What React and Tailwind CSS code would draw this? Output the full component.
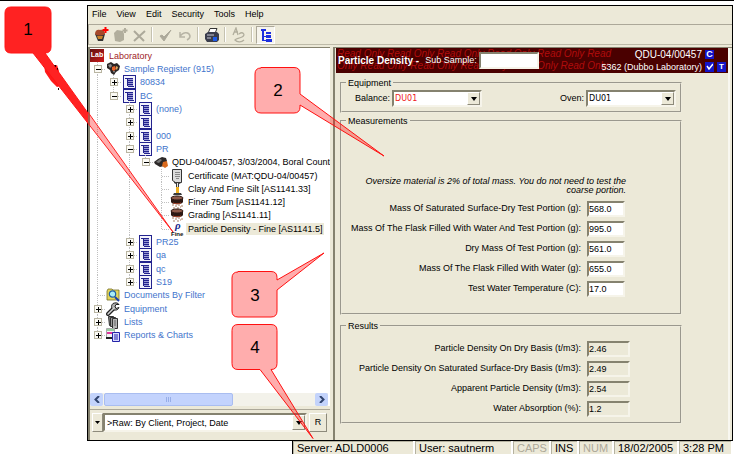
import React from "react";

const BLUE = "text-[#3f74cc]";

function SheetIcon() {
  return (
    <svg className="block shrink-0" width="14" height="14" viewBox="0 0 14 14" shapeRendering="crispEdges">
      <rect x="1" y="0" width="13" height="14" fill="#23238e" />
      <rect x="2" y="1" width="11" height="12" fill="#f4f4fc" />
      <path d="M5 4h6v7H5z" fill="#9a9ad4" />
      <path d="M3 3h8v1H3zM5 4h1v7H5zM6 5h5v1H6zM6 7h5v1H6zM6 9h5v1H6zM6 11h6v1H6z" fill="#23238e" />
    </svg>
  );
}

function RegisterIcon() {
  return (
    <svg className="block shrink-0" width="14" height="14" viewBox="0 0 14 14">
      <path d="M1 2l4-2 3 2 3-1 3 3-1 4-3 2-2 3-3-2-1-3-3-2z" fill="#2a2424" />
      <path d="M2 3l3-1 1 2-2 2z" fill="#8b8b8b" />
      <path d="M6 5l3-1 1 3-2 2-2-1z" fill="#e8622a" />
      <path d="M10 4l2 1-1 3-1-1z" fill="#d9a85c" />
      <path d="M7 9l2 0-1 2z" fill="#999" />
    </svg>
  );
}

function RockIcon() {
  return (
    <svg className="block shrink-0" width="14" height="14" viewBox="0 0 14 14">
      <path d="M0 7l4-3 4-2 4 1 1 3-3 5-4 1-5-3z" fill="#2c2828" />
      <path d="M2 7l4-3 2 1-3 3z" fill="#777" />
      <path d="M9 7l4-1 1 5-3 2-3-2z" fill="#d96a1e" />
    </svg>
  );
}

function CertificateIcon() {
  return (
    <svg className="block shrink-0" width="14" height="14" viewBox="0 0 14 14">
      <path d="M2.500 .5h9v13h-6l-3-2z" fill="#dcdcdc" stroke="#333" />
      <path d="M5 3.500h5M5 5.500h5M5 7.500h5M6 9.500h3" stroke="#888" />
    </svg>
  );
}

function CylinderIcon() {
  return (
    <svg className="block shrink-0" width="14" height="14" viewBox="0 0 14 14">
      <path d="M4 0h7v1L9 2v9h2l1 2H3l1-2h2V2L4 1z" fill="#3b3b3b" />
      <path d="M7 1h1v4H7z" fill="#e6e6e6" />
      <path d="M6 5h3v6H6z" fill="#f0b020" />
    </svg>
  );
}

function SieveIcon() {
  return (
    <svg className="block shrink-0" width="14" height="14" viewBox="0 0 14 14">
      <path d="M1 3v4c1 3 11 3 12 0V3z" fill="#2b1712" />
      <ellipse cx="7" cy="3" rx="6" ry="2" fill="#8e5a4a" stroke="#2b1712" />
      <path d="M3 8c2 1 6 1 8 0" stroke="#b04c32" fill="none" />
      <path d="M2 10h2M5 11h2M8 10h2M11 11h2M3 13h2M7 13h2M10 12h1" stroke="#a97c62" />
    </svg>
  );
}

function DensityIcon() {
  return (
    <svg className="block shrink-0 overflow-visible" width="14" height="14" viewBox="0 0 14 14">
      <text x="5" y="7" fontFamily="Liberation Serif, serif" fontStyle="italic" fontWeight="bold" fontSize="11" fill="#1a2a8c">ρ</text>
      <text x="1" y="14" fontFamily="Liberation Sans, sans-serif" fontWeight="bold" fontSize="6" fill="#111">Fine</text>
    </svg>
  );
}

function FolderSearchIcon() {
  return (
    <svg className="block shrink-0" width="14" height="14" viewBox="0 0 14 14">
      <path d="M1 3l1-2h4l1 1h6v10H1z" fill="#e3d55a" stroke="#77702a" strokeWidth=".8" />
      <circle cx="6.500" cy="6" r="3.200" fill="#a8ecf6" stroke="#1d5fa8" strokeWidth="1.200" />
      <path d="M9 9l4 4" stroke="#1d3fa8" strokeWidth="2" />
    </svg>
  );
}

function WrenchIcon() {
  return (
    <svg className="block shrink-0" width="14" height="14" viewBox="0 0 14 14">
      <path d="M2 12l6-6" stroke="#222" strokeWidth="4" strokeLinecap="round" />
      <path d="M7 1.500c2-1 5-1 6 1l-3 0-1 2 1 2 3-1c-1 3-4 3-6 2-2-2-2-4 0-6z" fill="#aaa" stroke="#222" />
      <path d="M2 12l6-6" stroke="#d5d5d5" strokeWidth="1.500" strokeLinecap="round" />
    </svg>
  );
}

function ListsIcon() {
  return (
    <svg className="block shrink-0" width="14" height="14" viewBox="0 0 14 14">
      <path d="M2.500 1.500h5l1 9h-5z" fill="#888" stroke="#333" />
      <path d="M4.500 2.500h5v9h-5z" fill="#999" stroke="#333" />
      <path d="M6.500 3.500h5v10h-5z" fill="#b5b5b5" stroke="#333" />
      <path d="M8 6h2M8 8h2M8 10h2" stroke="#666" />
    </svg>
  );
}

function ReportsIcon() {
  return (
    <svg className="block shrink-0" width="14" height="14" viewBox="0 0 14 14">
      <path d="M.5.500h8v9h-8z" fill="#f4f4f4" stroke="#aaa" />
      <path d="M1 2h7" stroke="#3aa84a" />
      <path d="M1 5h6" stroke="#e0359b" strokeWidth="2" />
      <path d="M0 10h6" stroke="#222" strokeWidth="2" />
      <path d="M6.500 4.500h7v9h-7z" fill="#dcdcff" stroke="#2323a8" />
      <path d="M8 7h4M8 9h4M8 11h4" stroke="#2323a8" />
    </svg>
  );
}

const TREE = [
  { label: "Sample Register (915)", path: "", node: "-", icon: RegisterIcon, blue: true },
  { label: "80834", path: "|", node: "+", icon: SheetIcon, blue: true },
  { label: "BC", path: "|", node: "-", icon: SheetIcon, blue: true, last: true },
  { label: "(none)", path: "| ", node: "+", icon: SheetIcon, blue: true },
  { label: "", path: "| ", node: "+", icon: SheetIcon, blue: true },
  { label: "000", path: "| ", node: "+", icon: SheetIcon, blue: true },
  { label: "PR", path: "| ", node: "-", icon: SheetIcon, blue: true },
  { label: "QDU-04/00457, 3/03/2004, Boral Country", path: "| |", node: "-", icon: RockIcon, last: true },
  { label: "Certificate (MAT:QDU-04/00457)", path: "| | ", node: "t", icon: CertificateIcon },
  { label: "Clay And Fine Silt [AS1141.33]", path: "| | ", node: "t", icon: CylinderIcon },
  { label: "Finer 75um [AS1141.12]", path: "| | ", node: "t", icon: SieveIcon },
  { label: "Grading [AS1141.11]", path: "| | ", node: "t", icon: SieveIcon },
  { label: "Particle Density - Fine [AS1141.5]", path: "| | ", node: "t", icon: DensityIcon, last: true, selected: true },
  { label: "PR25", path: "| ", node: "+", icon: SheetIcon, blue: true },
  { label: "qa", path: "| ", node: "+", icon: SheetIcon, blue: true },
  { label: "qc", path: "| ", node: "+", icon: SheetIcon, blue: true },
  { label: "S19", path: "| ", node: "+", icon: SheetIcon, blue: true, last: true },
  { label: "Documents By Filter", path: "", node: "t", icon: FolderSearchIcon, blue: true },
  { label: "Equipment", path: "", node: "+", icon: WrenchIcon, blue: true },
  { label: "Lists", path: "", node: "+", icon: ListsIcon, blue: true },
  { label: "Reports & Charts", path: "", node: "+", icon: ReportsIcon, blue: true, last: true },
];

function Branch({ kind, last }) {
  const boxed = kind === "+" || kind === "-";
  return (
    <svg className="block shrink-0" width="16" height="14" viewBox="0 0 16 14" shapeRendering="crispEdges">
      {kind !== " " && <path d={last ? "M7.5 0v7" : "M7.5 0v14"} stroke="#c0c0c0" strokeDasharray="1 1" />}
      {kind !== " " && kind !== "|" && <path d="M8 7.500h8" stroke="#c0c0c0" strokeDasharray="1 1" />}
      {boxed && <rect x="4.500" y="3.500" width="7" height="7" fill="#fbfaf5" stroke="#b9b5a2" />}
      {boxed && <path d="M6 7.500h5" stroke="#000" />}
      {kind === "+" && <path d="M8.500 5v5" stroke="#000" />}
    </svg>
  );
}

function TreeRow({ row }) {
  const Icon = row.icon;
  return (
    <li className="flex min-w-0 items-center">
      {row.path.split("").map((c, i) => (
        <Branch key={i} kind={c} />
      ))}
      <Branch kind={row.node} last={row.last} />
      <Icon />
      <span
        className={
          "ml-[2px] h-[12px] whitespace-nowrap px-[2px] leading-[12px] " +
          (row.selected ? "bg-[#ece9d8] " : "") +
          (row.blue ? BLUE : "text-black")
        }
      >
        {row.label}
      </span>
    </li>
  );
}

function ToolButton({ label, pressed, children }) {
  return (
    <button
      type="button"
      aria-label={label}
      className={
        "flex h-[18px] w-[19px] items-center justify-center " +
        (pressed ? "border border-[#aca899] border-r-white border-b-white bg-[#f6f4ec]" : "")
      }
    >
      <svg width="16" height="16" viewBox="0 0 16 16">{children}</svg>
    </button>
  );
}

function Separator() {
  return <span className="mx-[3px] h-[15px] w-[2px] border-r border-l border-l-[#c5c2b0] border-r-white" />;
}

function Toolbar() {
  return (
    <div className="flex h-[21px] items-center border-t border-l border-t-[#aca899] border-l-[#aca899] border-b border-b-[#bdbaa8] pl-[2px]">
      <ToolButton label="New sample">
        <path d="M2 7h10l-2 7H5z" fill="#333" />
        <path d="M2 7c0-4 3-5 5-4 3-1 5 1 5 4-3 2-8 2-10 0z" fill="#a5482a" />
        <path d="M4 9h6l-1 3H5z" fill="#c9812a" />
        <path d="M12.500 0v6M9.500 3h6" stroke="#f00" strokeWidth="2" />
      </ToolButton>
      <ToolButton label="New item">
        <path d="M2 6l3-3 6 1 1 3v6l-4 2-5-1z" fill="#b1ae9d" />
        <path d="M13 1v5M10.500 3.500h5" stroke="#b1ae9d" strokeWidth="2" />
      </ToolButton>
      <ToolButton label="Delete">
        <path d="M3 4l10 10M14 4L3 14" stroke="#aca99a" strokeWidth="2" />
      </ToolButton>
      <Separator />
      <ToolButton label="Accept">
        <path d="M2 9l4 5L13 3 6 10 4 8z" fill="#aca99a" stroke="#aca99a" />
      </ToolButton>
      <ToolButton label="Undo">
        <path d="M3 5v5h5M3 10c2-5 9-6 10-1 0 2-1 3-3 4" fill="none" stroke="#b7b4a5" strokeWidth="1.500" />
      </ToolButton>
      <Separator />
      <ToolButton label="Print">
        <path d="M6 1.500h7l-2 5H4z" fill="#fff" stroke="#333" />
        <path d="M1 7l3-2h9l2 2v6l-2 2H3l-2-3z" fill="#3a3d4c" />
        <path d="M3 8h7M3 11h4" stroke="#c9c9d4" />
        <path d="M9 10h4v4H9z" fill="#1e5ce8" />
      </ToolButton>
      <Separator />
      <ToolButton label="Spelling">
        <path d="M2 8l3-7 2 7M3 5h4M8 7c4-3 7 1 3 3s-5 1-7 3c2 2 6 3 9 0" fill="none" stroke="#b1ae9d" strokeWidth="1.300" />
      </ToolButton>
      <Separator />
      <ToolButton label="Show tree" pressed>
        <path d="M3 2h5v2H3zM4 4h2v10H4zM8 5h5v2H8zM8 8h5v3H8zM8 12h6v3H8zM6 6h2M6 9h2v1H6zM6 13h2v1H6z" fill="#1d2fe0" />
      </ToolButton>
    </div>
  );
}

function Arrow({ className }) {
  return (
    <span
      className={
        "pointer-events-none flex items-center justify-center border border-t-white border-l-white border-r-[#8d8a7b] border-b-[#8d8a7b] bg-[#ece9d8] " +
        className
      }
    >
      <svg width="6" height="4" viewBox="0 0 6 4">
        <path d="M0 0h6L3 4z" fill="#000" />
      </svg>
    </span>
  );
}

const INSET = "border-2 border-t-[#85826f] border-l-[#85826f] border-r-[#f6f4ea] border-b-[#f6f4ea]";

function Combo({ id, label, value, red }) {
  return (
    <div className="flex items-center gap-[2px]">
      <label htmlFor={id}>{label}</label>
      <div className="relative">
        <select
          id={id}
          defaultValue={value}
          className={
            "block h-[17px] w-[90px] appearance-none bg-white px-px font-['DejaVu_Sans','Noto_Sans',sans-serif] text-[8px] leading-[11px] " +
            INSET + (red ? " text-[#f02020]" : " text-black")
          }
        >
          <option>{value}</option>
        </select>
        <Arrow className="absolute top-[2px] right-[2px] h-[13px] w-[13px]" />
      </div>
    </div>
  );
}

function Field({ id, label, value, readOnly }) {
  return (
    <div className="flex items-center">
      <label htmlFor={id} className="flex-1 text-right">{label}</label>
      <div className="ml-[6px] w-[45px]">
        <input
          id={id}
          defaultValue={value}
          readOnly={readOnly}
          className={
            "block h-[16px] font-['Liberation_Sans',Arial,sans-serif] text-[9px] leading-[12px] text-black " +
            INSET + (readOnly ? " w-[43px] bg-[#ece9d8]" : " w-[38px] bg-white")
          }
        />
      </div>
    </div>
  );
}

function Group({ title, className, children }) {
  return (
    <fieldset className={"border-2 border-[#eeebdc] [border-style:groove] " + className}>
      <legend className="ml-[4px] px-[2px] leading-[10px]">{title}</legend>
      {children}
    </fieldset>
  );
}

const MEASUREMENTS = [
  ["Mass Of Saturated Surface-Dry Test Portion (g):", "568.0"],
  ["Mass Of The Flask Filled With Water And Test Portion (g):", "995.0"],
  ["Dry Mass Of Test Portion (g):", "561.0"],
  ["Mass Of The Flask Filled With Water (g):", "655.0"],
  ["Test Water Temperature (C):", "17.0"],
];

const RESULTS = [
  ["Particle Density On Dry Basis (t/m3):", "2.46"],
  ["Particle Density On Saturated Surface-Dry Basis (t/m3):", "2.49"],
  ["Apparent Particle Density (t/m3):", "2.54"],
  ["Water Absorption (%):", "1.2"],
];

function Banner() {
  const line = "Read Only ".repeat(5);
  return (
    <header className="relative flex h-[25px] items-center overflow-hidden bg-[#4a0000] text-white">
      <div aria-hidden="true" className="absolute inset-0 overflow-hidden whitespace-nowrap pl-px text-[10px] leading-[12px] text-[#b00c0c] italic">
        <p>{line}Read</p>
        <p>Only {line}</p>
      </div>
      <h1 className="relative ml-[2px] text-[10px] font-bold">Particle Density -</h1>
      <label htmlFor="sub" className="relative ml-[6px] text-[9px]">Sub Sample:</label>
      <input id="sub" className={"relative ml-[2px] h-[17px] w-[60px] bg-white text-[9px] text-black " + INSET} />
      <div className="relative ml-auto flex flex-col text-[10px] leading-[12px]">
        <div className="flex items-center justify-end gap-[3px] pr-[14px]">
          <span>QDU-04/00457</span>
          <span className="flex h-[9px] w-[9px] items-center justify-center bg-[#1414c8] text-[9px] font-bold leading-[9px]">C</span>
        </div>
        <div className="flex items-center justify-end gap-[3px] pr-[2px]">
          <span className="text-[9px]">5362 (Dubbo Laboratory)</span>
          <span className="flex h-[10px] w-[9px] items-center justify-center bg-[#1414c8]">
            <svg width="7" height="7" viewBox="0 0 7 7"><path d="M1 3l2 3 4-5" stroke="#fff" strokeWidth="1.500" fill="none" /></svg>
          </span>
          <span className="flex h-[10px] w-[9px] items-center justify-center bg-[#1414c8] text-[8px] font-bold leading-[10px]">T</span>
        </div>
      </div>
    </header>
  );
}

function Callouts() {
  return (
    <svg className="pointer-events-none absolute top-0 left-0" width="400" height="454" viewBox="0 0 400 454" fontFamily="Liberation Sans, Arial, sans-serif" fontSize="17" textAnchor="middle">
      <defs>
        <clipPath id="outside"><rect x="0" y="0" width="88" height="454" /></clipPath>
        <clipPath id="inside"><rect x="88" y="0" width="312" height="454" /></clipPath>
      </defs>
      <path d="M44 63l8 3 5-2 2 6-1 6 2 9-3 1-6-6-6-9z" fill="#ff1a1a" />
      <path d="M54 64h2v2h-2zM57 67h1v2h-1zM58 73h1v2h-1zM59 79h1v2h-1zM58 87h1v2h-1zM43 65h1v1h-1z" fill="#200" />
      <path d="M11 6h34q6 0 6 6v34q0 6-6 6l128 179L33 52H11q-6 0-6-6V12q0-6 6-6z" fill="#ff2222" stroke="#ff1414" clipPath="url(#outside)" />
      <path d="M46 52L173 231 33 52z" fill="#ff0000" fillOpacity=".32" stroke="#ff2020" clipPath="url(#inside)" />
      <g fill="#ff0000" fillOpacity=".32" stroke="#ff1010">
        <path d="M261 66.500h33q6 0 6 6V93l84 62-84-51v2q0 6-6 6h-33q-6 0-6-6v-33q0-6 6-6z" />
        <path d="M238 270.500h33q6 0 6 6V279l47-27-47 37v21q0 6-6 6h-33q-6 0-6-6v-33q0-6 6-6z" />
        <path d="M238 323.500h33q6 0 6 6v33q0 6-6 6l42 69-53-69h-22q-6 0-6-6v-33q0-6 6-6z" />
      </g>
      <text x="28" y="34">1</text>
      <text x="278" y="95">2</text>
      <text x="255" y="300">3</text>
      <text x="255" y="352">4</text>
    </svg>
  );
}

function StatusCell({ children, className }) {
  return (
    <span className={"flex h-full items-center border-r-2 border-r-white pl-[4px] shadow-[inset_1px_1px_0_#b5b2a0] " + className}>
      {children}
    </span>
  );
}

export default function App() {
  return (
    <div className="relative w-full overflow-hidden border-t border-black bg-white pt-[4px] pr-px font-['Liberation_Sans',Arial,sans-serif] text-[9px] text-black">
      <main className="ml-[87px] border border-black bg-[#ece9d8]">
        <nav className="flex h-[18px] items-center gap-[10px] pl-[4px]">
          {["File", "View", "Edit", "Security", "Tools", "Help"].map((m) => (
            <button key={m} type="button">{m}</button>
          ))}
        </nav>
        <Toolbar />
        <div className="flex pt-[2px]">
          <aside className="flex w-[242px] shrink-0 flex-col border-t border-l-2 border-t-[#85826f] border-l-[#85826f]">
            <div className="flex flex-1 flex-col overflow-hidden bg-white pt-px">
              <ul className="grid h-[293px] auto-rows-fr">
                <li className="flex items-center text-[#a01c28]">
                  <span aria-hidden="true" className="flex h-[13px] w-[14px] items-center justify-center bg-linear-to-br from-[#5e1010] to-[#d01818] text-[7px] font-bold text-white">
                    Lab
                  </span>
                  <span className="ml-[5px] leading-[12px]">Laboratory</span>
                </li>
                {TREE.map((row, i) => (
                  <TreeRow key={i} row={row} />
                ))}
              </ul>
              <div className="mt-auto mr-[2px] flex h-[13px] justify-between bg-[#f3f2ea]">
                <button type="button" aria-label="Scroll left" className="flex w-[13px] items-center justify-center rounded-[2px] bg-[#c3d3fb]">
                  <svg width="6" height="7" viewBox="0 0 6 7"><path d="M5 0L1.500 3.500 5 7" fill="none" stroke="#31456f" strokeWidth="2" /></svg>
                </button>
                <span className="mx-px flex w-[129px] items-center justify-center gap-px rounded-[2px] border border-[#a9bdf0] bg-[#c3d3fd]">
                  <i className="h-[5px] w-px bg-[#97aee8]" />
                  <i className="h-[5px] w-px bg-[#97aee8]" />
                  <i className="h-[5px] w-px bg-[#97aee8]" />
                </span>
                <span className="flex-1" />
                <button type="button" aria-label="Scroll right" className="flex w-[13px] items-center justify-center rounded-[2px] bg-[#c3d3fb]">
                  <svg width="6" height="7" viewBox="0 0 6 7"><path d="M1 0l3.500 3.500L1 7" fill="none" stroke="#31456f" strokeWidth="2" /></svg>
                </button>
              </div>
            </div>
            <div className="mt-[3px] flex h-[31px] items-start border-t border-[#aca899] pt-[3px] pl-[2px]">
              <button type="button" aria-label="Filter menu" className="flex h-[19px] w-[11px] items-center justify-center border border-t-white border-l-white border-r-[#8d8a7b] border-b-[#8d8a7b]">
                <svg width="5" height="3" viewBox="0 0 5 3"><path d="M0 0h5L2.500 3z" fill="#000" /></svg>
              </button>
              <div className="relative flex-1">
                <select aria-label="View" className={"block h-[19px] w-full appearance-none bg-white pl-[2px] text-[9px] leading-[12px] text-black " + INSET}>
                  <option>&gt;Raw: By Client, Project, Date</option>
                </select>
                <Arrow className="absolute top-[2px] right-[2px] h-[15px] w-[13px]" />
              </div>
              <button type="button" className="mr-[3px] ml-[2px] h-[19px] w-[18px] border border-t-white border-l-white border-r-[#8d8a7b] border-b-[#8d8a7b]">R</button>
            </div>
          </aside>
          <section className="ml-[3px] min-w-0 flex-1 border-t border-l-2 border-t-[#85826f] border-l-[#85826f] pl-px">
            <div className="mr-[2px] border-r-2 border-[#f8f7f0]">
              <Banner />
              <form className="ml-[4px] max-w-[342px] pt-[5px] pb-[16px]">
                <Group title="Equipment" className="pb-[4px]">
                  <div className="flex justify-between pt-[2px] pr-[4px] pl-[13px]">
                    <Combo id="balance" label="Balance:" value="DU01" red />
                    <Combo id="oven" label="Oven:" value="DU01" />
                  </div>
                </Group>
                <Group title="Measurements" className="mt-[3px] pr-[48px] pb-[16px]">
                  <p className="ml-[12px] pt-[51px] pb-[6px] pr-[6px] text-right leading-[9px] italic">
                    Oversize material is 2% of total mass. You do not need to test the coarse portion.
                  </p>
                  <div className="flex flex-col gap-[4px]">
                    {MEASUREMENTS.map(([l, v], i) => (
                      <Field key={l} id={"m" + i} label={l} value={v} />
                    ))}
                  </div>
                </Group>
                <Group title="Results" className="mt-[6px] pr-[48px] pb-[5px]">
                  <div className="flex flex-col gap-[4px] pt-[10px]">
                    {RESULTS.map(([l, v], i) => (
                      <Field key={l} id={"r" + i} label={l} value={v} readOnly />
                    ))}
                  </div>
                </Group>
              </form>
            </div>
          </section>
        </div>
      </main>
      <footer className="ml-auto flex h-[14px] w-[441px] items-center border-l border-black bg-[#ece9d8] text-[11px] leading-[13px] whitespace-nowrap">
        <StatusCell className="flex-1">Server: ADLD0006</StatusCell>
        <StatusCell className="w-[98px]">User: sautnerm</StatusCell>
        <StatusCell className="w-[38px] text-[#aca899]">CAPS</StatusCell>
        <StatusCell className="w-[28px]">INS</StatusCell>
        <StatusCell className="w-[35px] text-[#aca899]">NUM</StatusCell>
        <StatusCell className="w-[65px]">18/02/2005</StatusCell>
        <StatusCell className="w-[54px]">3:28 PM</StatusCell>
      </footer>
      <Callouts />
    </div>
  );
}
